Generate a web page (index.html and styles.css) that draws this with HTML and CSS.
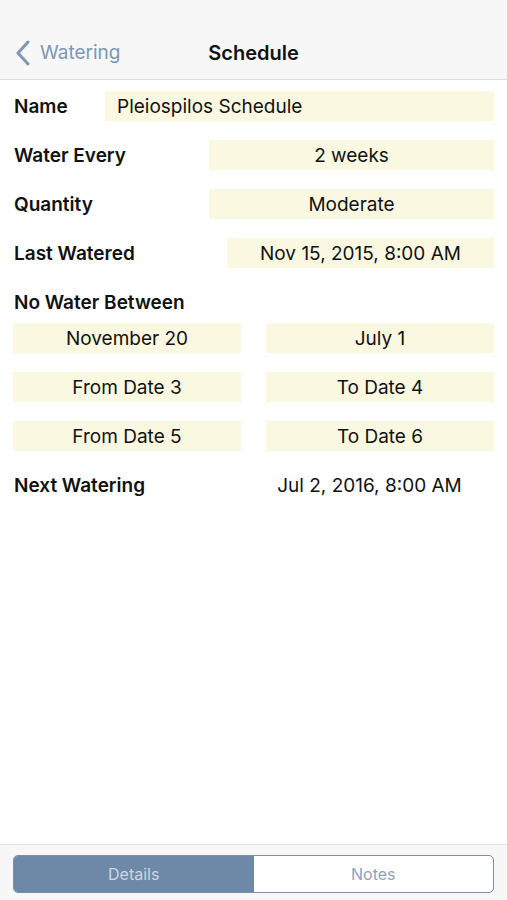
FILE: index.html
```html
<!DOCTYPE html>
<html lang="en">
<head>
    <meta charset="UTF-8">
    <meta name="viewport" content="width=device-width, initial-scale=1.0">
    <title>Schedule</title>
    <link rel="stylesheet" href="styles.css">
</head>
<body>
    <!-- Barra di navigazione -->
    <div class="nav-bar">
        <div class="back">
            <svg class="chevron" width="18" height="26" viewBox="0 0 18 26">
                <path d="M14 2 L4 13 L14 24" fill="none" stroke="#7f96b5" stroke-width="3" stroke-linecap="round" stroke-linejoin="round"/>
            </svg>
            <span>Watering</span>
        </div>
        <div class="nav-title">Schedule</div>
    </div>

    <!-- Dettagli della pianta -->
    <div class="content">
        <div class="row">
            <div class="label">Name</div>
            <div class="box box-name">Pleiospilos Schedule</div>
        </div>
        <div class="row">
            <div class="label">Water Every</div>
            <div class="box box-mid">2 weeks</div>
        </div>
        <div class="row">
            <div class="label">Quantity</div>
            <div class="box box-mid">Moderate</div>
        </div>
        <div class="row">
            <div class="label">Last Watered</div>
            <div class="box box-date">Nov 15, 2015, 8:00 AM</div>
        </div>
        <div class="row heading">
            <div class="label">No Water Between</div>
        </div>
        <div class="ranges">
            <div class="box">November 20</div>
            <div class="box">July 1</div>
            <div class="box">From Date 3</div>
            <div class="box">To Date 4</div>
            <div class="box">From Date 5</div>
            <div class="box">To Date 6</div>
        </div>
        <div class="row">
            <div class="label">Next Watering</div>
            <div class="value">Jul 2, 2016, 8:00 AM</div>
        </div>
    </div>

    <!-- Selettore in basso -->
    <div class="tab-bar">
        <div class="segmented">
            <div class="segment active">Details</div>
            <div class="segment">Notes</div>
        </div>
    </div>
</body>
</html>
```

FILE: styles.css
```css
body {
    font-family: Inter, "Liberation Sans", sans-serif;
    margin: 0;
    background-color: #ffffff;
    color: #111111;
    height: 900px;
    display: flex;
    flex-direction: column;
}

.nav-bar {
    height: 80px;
    background-color: #f7f7f7;
    border-bottom: 1px solid #dddddd;
    display: flex;
    align-items: center;
    padding-top: 26px;
    box-sizing: border-box;
    position: relative;
}

.back {
    display: flex;
    align-items: center;
    gap: 8px;
    padding-left: 14px;
    color: #7f96b5;
    font-size: 19px;
}

.nav-title {
    position: absolute; /* titolo centrato sopra la barra */
    left: 0;
    right: 0;
    top: 26px;
    bottom: 0;
    display: flex;
    align-items: center;
    justify-content: center;
    font-size: 20px;
    font-weight: 600;
    pointer-events: none;
}

.content {
    flex: 1;
    padding: 11px 13px 0;
    display: flex;
    flex-direction: column;
    gap: 19px;
}

.row {
    display: flex;
    align-items: center;
    justify-content: space-between;
    height: 30px;
}

.heading {
    margin-bottom: -13px;
}

.label {
    font-size: 19px;
    font-weight: 600;
    padding-left: 1px;
}

.box {
    background-color: #fbf8e2;
    height: 30px;
    display: flex;
    align-items: center;
    justify-content: center;
    font-size: 19px;
}

.box-name {
    width: 389px;
    justify-content: flex-start;
    padding-left: 12px;
    box-sizing: border-box;
}

.box-mid {
    width: 285px;
}

.box-date {
    width: 267px;
}

.ranges {
    display: grid;
    grid-template-columns: 1fr 1fr;
    column-gap: 25px;
    row-gap: 19px;
}

.value {
    width: 249px;
    text-align: center;
    font-size: 19px;
}

.tab-bar {
    height: 56px;
    background-color: #f7f7f7;
    border-top: 1px solid #e2e2e2;
    padding: 10px 13px 0;
    box-sizing: border-box;
}

.segmented {
    display: flex;
    height: 36px;
    border: 1px solid #7d8ea5;
    border-radius: 5px;
    overflow: hidden;
    background-color: #ffffff;
}

.segment {
    flex: 1;
    display: flex;
    align-items: center;
    justify-content: center;
    font-size: 16px;
    color: #8ea2bd;
}

.segment.active {
    background-color: #6e88a8;
    color: #cdd7e4;
}
```
